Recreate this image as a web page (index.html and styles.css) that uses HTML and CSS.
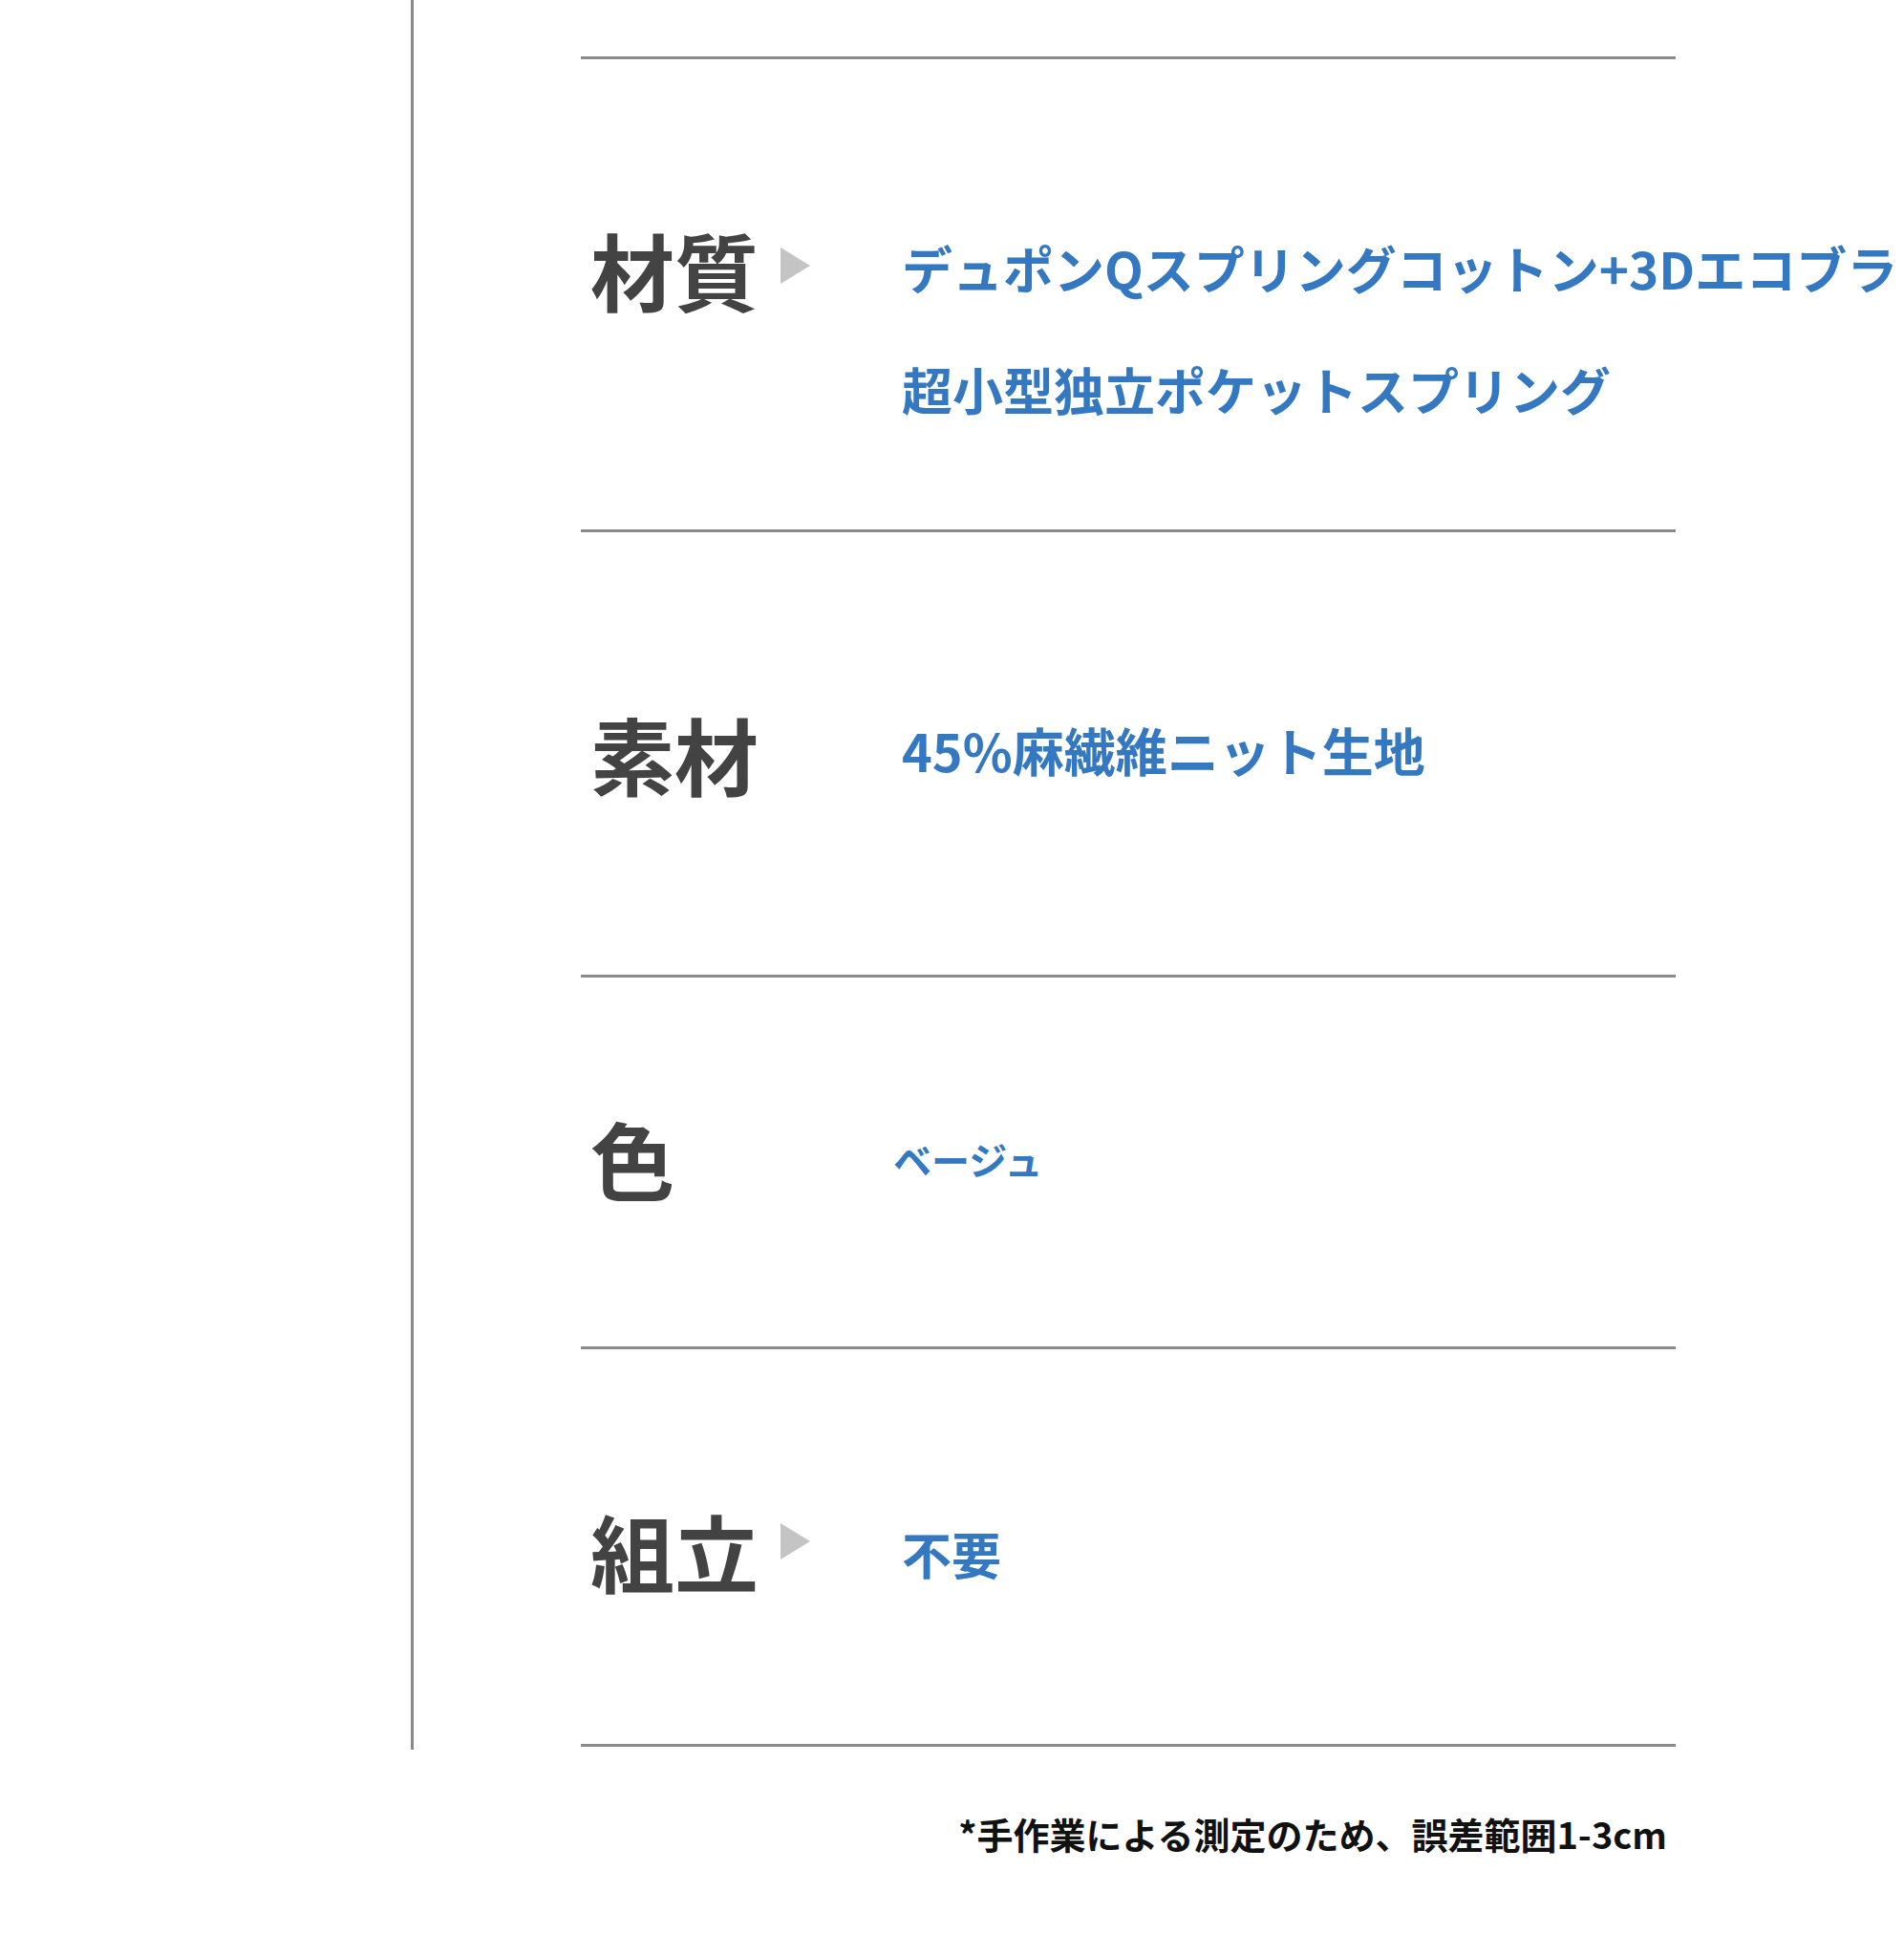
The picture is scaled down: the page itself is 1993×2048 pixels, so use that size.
FILE: index.html
```html
<!DOCTYPE html>
<html lang="ja">
<head>
<meta charset="utf-8">
<title>仕様</title>
<link rel="stylesheet" href="styles.css">
</head>
<body>
<div class="page">
  <div class="rail"></div>
  <main class="spec">
    <section class="row row--material">
      <div class="label"><span class="label-text">材質</span><span class="arrow arrow--material"></span></div>
      <div class="value value--material">
        <p class="value-line">デュポンQスプリングコットン+3Dエコブラ</p>
        <p class="value-line">超小型独立ポケットスプリング</p>
      </div>
    </section>
    <section class="row row--fabric">
      <div class="label"><span class="label-text">素材</span></div>
      <div class="value value--fabric"><p class="value-line">45%麻繊維ニット生地</p></div>
    </section>
    <section class="row row--color">
      <div class="label"><span class="label-text">色</span></div>
      <div class="value value--color"><p class="value-line">ベージュ</p></div>
    </section>
    <section class="row row--assembly">
      <div class="label"><span class="label-text">組立</span><span class="arrow"></span></div>
      <div class="value value--assembly"><p class="value-line">不要</p></div>
    </section>
    <p class="note">*手作業による測定のため、誤差範囲1-3cm</p>
  </main>
</div>
</body>
</html>
```
FILE: styles.css
```css
html, body {
  margin: 0;
  padding: 0;
  background: #ffffff;
  overflow: hidden;
}

body {
  font-family: "Noto Sans CJK JP", "Noto Sans", sans-serif;
  font-weight: 700;
}

.page {
  display: flex;
  align-items: flex-start;
  width: 1993px;
}

.rail {
  flex: none;
  width: 433px;
  height: 1831px;
  border-right: 3px solid #8a8a8a;
  box-sizing: border-box;
}

.spec {
  flex: none;
  width: 1146px;
  margin-left: 175px;
  padding-top: 59px;
}

.row {
  display: flex;
  align-items: flex-start;
  border-top: 3px solid #8a8a8a;
  box-sizing: border-box;
}

.row--material { height: 495px; padding-top: 155px; }
.row--fabric { height: 466px; padding-top: 181px; }
.row--color { height: 389px; padding-top: 138px; }
.row--assembly { height: 419px; padding-top: 160px; border-bottom: 3px solid #8a8a8a; }

.label {
  flex: none;
  width: 336px;
  padding-left: 10px;
  box-sizing: border-box;
  display: flex;
  align-items: center;
  height: 100px;
}

.row--material .label { height: 127px; }

.label-text {
  font-size: 88px;
  line-height: 100px;
  color: #434343;
  white-space: nowrap;
}

.arrow {
  width: 0;
  height: 0;
  margin-left: 23px;
  margin-bottom: 18px;
  border-left: 31px solid #c4c4c4;
  border-top: 19px solid transparent;
  border-bottom: 19px solid transparent;
}

.arrow--material { margin-bottom: 5px; }

.value {
  color: #3478c2;
  white-space: nowrap;
}

.value-line {
  margin: 0;
  line-height: 100px;
}

.value--material { font-size: 53px; }
.value--material .value-line { line-height: 127px; }
.value--fabric { font-size: 54px; margin-top: -3px; }
.value--color { font-size: 40px; margin-top: 2px; margin-left: -9px; }
.value--assembly { font-size: 52px; margin-top: 4px; }

.note {
  margin: 66px 0 0;
  padding-right: 9px;
  text-align: right;
  font-size: 38px;
  line-height: 50px;
  color: #111111;
  white-space: nowrap;
}
```
